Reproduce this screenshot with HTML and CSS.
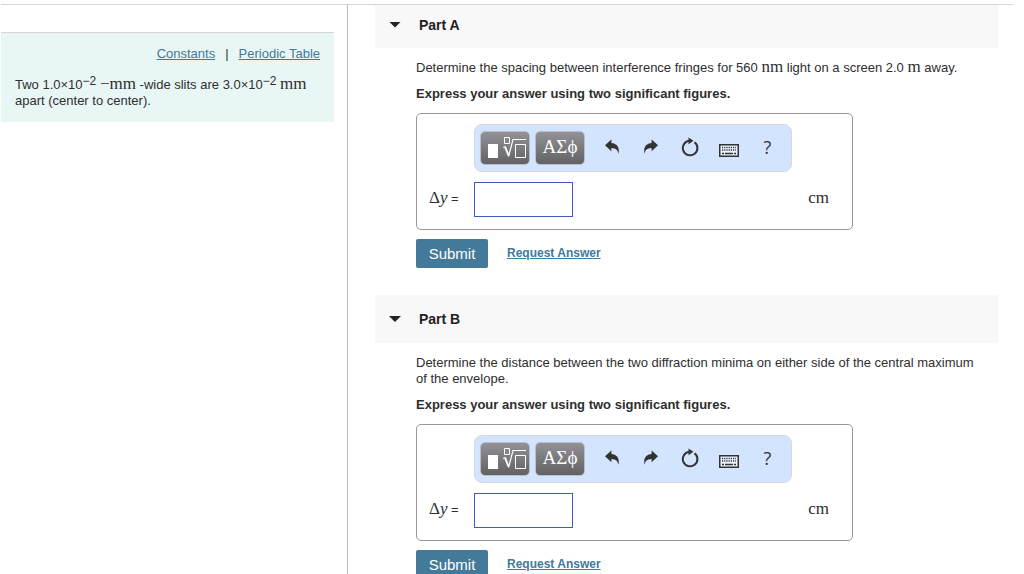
FILE: index.html
```html
<!DOCTYPE html>
<html lang="en">
<head>
<meta charset="utf-8">
<title>Double-slit interference</title>
<link rel="stylesheet" href="styles.css">
</head>
<body>
<svg class="sprite" aria-hidden="true">
  <symbol id="i-templates" viewBox="0 0 48 32">
    <path d="M7 12h10v14H7z" fill="#fff"/>
    <g fill="none" stroke="#fff">
      <path d="M23.500 5.500h5v6h-5z"/>
      <path d="M34.500 12.500h10v13h-10z"/>
      <path d="M22 15.500L24 14.500"/>
      <path d="M24 14.500L27.500 23.500" stroke-width="2"/>
      <path d="M27.500 24.500L32 7.500H45" stroke-width="1.200"/>
    </g>
  </symbol>
  <symbol id="i-undo" viewBox="0 0 16 18">
    <path d="M1 7.200L7.400 1.500V5c4.800.2 7.400 3.400 7.400 7.500 0 1.400-.2 2.300-.6 3.300-.3-3.900-2.200-5.600-6.800-5.800v3.300z" fill="#333"/>
  </symbol>
  <symbol id="i-redo" viewBox="0 0 16 18">
    <path d="M15 7.200L8.600 1.500V5C3.800 5.200 1.200 8.400 1.200 12.500c0 1.400.2 2.300.6 3.300.3-3.900 2.200-5.600 6.800-5.800v3.300z" fill="#333"/>
  </symbol>
  <symbol id="i-reset" viewBox="0 0 18 20">
    <path d="M13.500 5.200A7.300 7.300 0 1 1 8.200 3.800" fill="none" stroke="#333" stroke-width="2"/>
    <path d="M7.500.5L12.500 3.700 7.500 7.200z" fill="#333"/>
  </symbol>
  <symbol id="i-keyboard" viewBox="0 0 20 13">
    <path d="M.75.75h18.500v11.500H.75z" fill="#edf4ff" stroke="#333" stroke-width="1.500"/>
    <path d="M3 3.500h14M3 6h14" stroke="#333" stroke-width="1.500" stroke-dasharray="1.200 1"/>
    <path d="M3 9.500h2M6 9.500h8M15 9.500h2" stroke="#333" stroke-width="1.500"/>
  </symbol>
</svg>

<div class="page">
  <aside class="sidebar">
    <div class="problem">
      <nav class="links">
        <a href="#constants">Constants</a><span class="divider">|</span><a href="#periodic">Periodic Table</a>
      </nav>
      <p class="problem-text">Two 1.0×10<sup>−2</sup> <span class="math">−mm</span> -wide slits are 3.0×10<sup>−2</sup> <span class="math">mm</span> apart (center to center).</p>
    </div>
  </aside>

  <main class="main">
    <section class="part">
      <h2 class="part-head part-head-first"><button class="toggle" type="button" aria-label="Collapse Part A"></button>Part A</h2>
      <form class="part-body">
        <p>Determine the spacing between interference fringes for 560 <span class="math">nm</span> light on a screen 2.0 <span class="math">m</span> away.</p>
        <p class="instruction">Express your answer using two significant figures.</p>
        <div class="answer">
          <div class="toolbar" role="toolbar">
            <button class="key" type="button" aria-label="Templates"><svg class="ic-templates"><use href="#i-templates"/></svg></button>
            <button class="key symbols" type="button">ΑΣϕ</button>
            <button class="tool" type="button" aria-label="Undo"><svg class="ic-arrow"><use href="#i-undo"/></svg></button>
            <button class="tool" type="button" aria-label="Redo"><svg class="ic-arrow"><use href="#i-redo"/></svg></button>
            <button class="tool" type="button" aria-label="Reset"><svg class="ic-reset"><use href="#i-reset"/></svg></button>
            <button class="tool tool-low" type="button" aria-label="Keyboard shortcuts"><svg class="ic-keyboard"><use href="#i-keyboard"/></svg></button>
            <button class="tool" type="button">?</button>
          </div>
          <label class="variable" for="answer-a"><span class="math">Δ<i>y</i></span> =</label>
          <input class="field" id="answer-a" type="text">
          <span class="unit math">cm</span>
        </div>
        <div class="actions">
          <button class="submit" type="submit">Submit</button>
          <a class="request" href="#request-a">Request Answer</a>
        </div>
      </form>
    </section>

    <section class="part">
      <h2 class="part-head"><button class="toggle" type="button" aria-label="Collapse Part B"></button>Part B</h2>
      <form class="part-body">
        <p>Determine the distance between the two diffraction minima on either side of the central maximum of the envelope.</p>
        <p class="instruction">Express your answer using two significant figures.</p>
        <div class="answer">
          <div class="toolbar" role="toolbar">
            <button class="key" type="button" aria-label="Templates"><svg class="ic-templates"><use href="#i-templates"/></svg></button>
            <button class="key symbols" type="button">ΑΣϕ</button>
            <button class="tool" type="button" aria-label="Undo"><svg class="ic-arrow"><use href="#i-undo"/></svg></button>
            <button class="tool" type="button" aria-label="Redo"><svg class="ic-arrow"><use href="#i-redo"/></svg></button>
            <button class="tool" type="button" aria-label="Reset"><svg class="ic-reset"><use href="#i-reset"/></svg></button>
            <button class="tool tool-low" type="button" aria-label="Keyboard shortcuts"><svg class="ic-keyboard"><use href="#i-keyboard"/></svg></button>
            <button class="tool" type="button">?</button>
          </div>
          <label class="variable" for="answer-b"><span class="math">Δ<i>y</i></span> =</label>
          <input class="field" id="answer-b" type="text">
          <span class="unit math">cm</span>
        </div>
        <div class="actions">
          <button class="submit" type="submit">Submit</button>
          <a class="request" href="#request-b">Request Answer</a>
        </div>
      </form>
    </section>
  </main>
</div>
</body>
</html>
```
FILE: styles.css
```css
* { box-sizing: border-box; }

body {
  margin: 0;
  padding: 4px 11px 0 1px;
  background: #fff;
  color: #2e2e2e;
  font: 13px/16px "Liberation Sans", Arial, sans-serif;
}

p { margin: 0; }
a { color: #417a9b; text-decoration: underline; }
button { font: inherit; padding: 0; border: 0; background: none; cursor: pointer; }
svg { display: block; }
.sprite { display: none; }

.math { font-family: "Liberation Serif", "Times New Roman", serif; font-size: 17px; line-height: 14px; }

.page {
  display: grid;
  grid-template-columns: 347px 1fr;
  min-height: calc(100vh - 4px);
  border-top: 1px solid #d6d6d6;
}

.sidebar {
  padding: 27px 13px 0 0;
  border-right: 1px solid #b9bdcb;
}

.problem {
  padding: 13px 14px 13px 14px;
  border-top: 1px solid #d6d6d6;
  background: #e9f6f6;
}

.links { display: flex; justify-content: flex-end; margin-bottom: 15px; }
.divider { padding: 0 10px; }
.problem-text sup { font-size: 12px; line-height: 0; vertical-align: 4px; }

.main { padding: 0 15px 0 27px; }
.part { padding-bottom: 27px; }

.part-head {
  display: flex;
  align-items: center;
  height: 48px;
  margin: 0;
  padding-left: 14px;
  background: #f8f8f8;
  color: #222;
  font-size: 14px;
}
.part-head-first { height: 43px; padding-bottom: 4px; }

.toggle {
  width: 12px;
  height: 6px;
  margin-right: 18px;
  background: #222;
  clip-path: polygon(0 0, 100% 0, 50% 100%);
}

.part-body { padding: 12px 18px 0 41px; }
.instruction { margin: 10px 0 11px; font-weight: bold; }

.answer {
  display: grid;
  grid-template-columns: 45px 318px 1fr;
  row-gap: 10px;
  max-width: 437px;
  padding: 10px 12px 12px;
  border: 1px solid #999;
  border-radius: 5px;
  align-items: center;
}

.toolbar {
  display: flex;
  grid-column: 2;
  align-items: center;
  height: 48px;
  padding-left: 5px;
  border: 1px solid #d6d9e0;
  border-radius: 8px;
  background: #d3e4fe;
}

.key {
  display: grid;
  place-items: center;
  width: 50px;
  height: 34px;
  margin-right: 5px;
  border: 1px solid #b9bec8;
  border-radius: 5px;
  background: linear-gradient(#929297, #626264);
  color: #fff;
}
.symbols { margin-right: 7px; font: 19px/24px "Liberation Serif", "Times New Roman", serif; padding-bottom: 3px; }

.tool {
  display: grid;
  place-items: center;
  width: 39px;
  height: 34px;
  padding-bottom: 2px;
  color: #333;
  font: 18px/24px "Open Sans", sans-serif;
}
.tool-low { padding: 4px 0 0; }

.ic-templates { width: 48px; height: 32px; }
.ic-arrow { width: 16px; height: 18px; }
.ic-reset { width: 18px; height: 20px; }
.ic-keyboard { width: 20px; height: 13px; }

.variable { grid-column: 1; white-space: nowrap; padding-bottom: 2px; }

.field {
  width: 99px;
  height: 35px;
  padding: 0 6px;
  border: 1px solid #3c5bc4;
  background: #fff;
  font: inherit;
}

.unit { justify-self: end; padding: 0 11px 3px 0; }

.actions { display: flex; align-items: center; gap: 19px; margin-top: 9px; }

.submit {
  width: 72px;
  height: 29px;
  border-radius: 2px;
  background: #437a99;
  color: #fff;
  font-size: 15px;
}

.request { font-size: 12px; font-weight: bold; padding-bottom: 2px; }
```
